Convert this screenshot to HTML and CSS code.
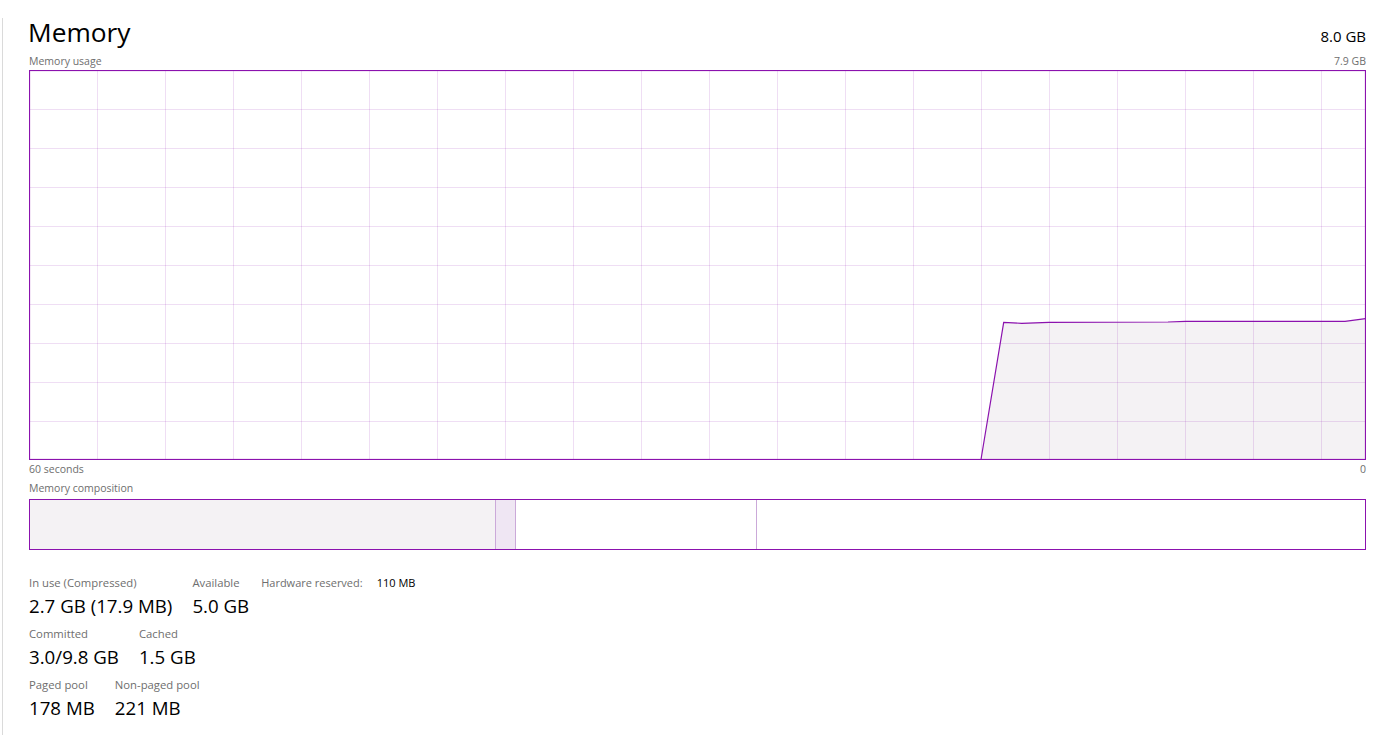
FILE: index.html
```html
<!DOCTYPE html>
<html lang="en">
<head>
<meta charset="utf-8">
<title>Memory</title>
<link rel="stylesheet" href="styles.css">
</head>
<body>
<div class="page">
  <div class="panel">
    <div class="header">
      <div class="title">Memory</div>
      <div class="total">8.0 GB</div>
    </div>
    <div class="caption-row">
      <span>Memory usage</span>
      <span>7.9 GB</span>
    </div>
    <div class="graph">
      <svg class="graph-svg" width="1337" height="390" viewBox="0 0 1337 390" xmlns="http://www.w3.org/2000/svg">
        <polygon points="952,389.5 974.7,252.3 992.7,253.3 1020,252.3 1139,252 1156.7,251.3 1316,251.3 1336.5,248.7 1336.5,389.5" fill="#f4f2f4"/>
        <g stroke="rgba(139,18,174,0.14)" stroke-width="1" shape-rendering="crispEdges">
          <line x1="68.5" y1="0" x2="68.5" y2="390"/>
          <line x1="136.5" y1="0" x2="136.5" y2="390"/>
          <line x1="204.5" y1="0" x2="204.5" y2="390"/>
          <line x1="272.5" y1="0" x2="272.5" y2="390"/>
          <line x1="340.5" y1="0" x2="340.5" y2="390"/>
          <line x1="408.5" y1="0" x2="408.5" y2="390"/>
          <line x1="476.5" y1="0" x2="476.5" y2="390"/>
          <line x1="544.5" y1="0" x2="544.5" y2="390"/>
          <line x1="612.5" y1="0" x2="612.5" y2="390"/>
          <line x1="680.5" y1="0" x2="680.5" y2="390"/>
          <line x1="748.5" y1="0" x2="748.5" y2="390"/>
          <line x1="816.5" y1="0" x2="816.5" y2="390"/>
          <line x1="884.5" y1="0" x2="884.5" y2="390"/>
          <line x1="952.5" y1="0" x2="952.5" y2="390"/>
          <line x1="1020.5" y1="0" x2="1020.5" y2="390"/>
          <line x1="1088.5" y1="0" x2="1088.5" y2="390"/>
          <line x1="1156.5" y1="0" x2="1156.5" y2="390"/>
          <line x1="1224.5" y1="0" x2="1224.5" y2="390"/>
          <line x1="1292.5" y1="0" x2="1292.5" y2="390"/>
          <line x1="0" y1="39.5" x2="1337" y2="39.5"/>
          <line x1="0" y1="78.5" x2="1337" y2="78.5"/>
          <line x1="0" y1="117.5" x2="1337" y2="117.5"/>
          <line x1="0" y1="156.5" x2="1337" y2="156.5"/>
          <line x1="0" y1="195.5" x2="1337" y2="195.5"/>
          <line x1="0" y1="234.5" x2="1337" y2="234.5"/>
          <line x1="0" y1="273.5" x2="1337" y2="273.5"/>
          <line x1="0" y1="312.5" x2="1337" y2="312.5"/>
          <line x1="0" y1="351.5" x2="1337" y2="351.5"/>
        </g>
        <polyline points="952,389.5 974.7,252.3 992.7,253.3 1020,252.3 1139,252 1156.7,251.3 1316,251.3 1336.5,248.7" fill="none" stroke="#8b12ae" stroke-width="1.2"/>
        <rect x="0.5" y="0.5" width="1336" height="389" fill="none" stroke="#8b12ae" stroke-width="1.2"/>
      </svg>
    </div>
    <div class="caption-row axis">
      <span>60 seconds</span>
      <span>0</span>
    </div>
    <div class="caption-row comp-caption">
      <span>Memory composition</span>
    </div>
    <div class="composition">
      <div class="seg seg-inuse" style="width:466px"></div>
      <div class="seg seg-modified" style="width:20px"></div>
      <div class="seg seg-standby" style="width:241px"></div>
      <div class="seg seg-free"></div>
    </div>
    <div class="stats">
      <div class="stat-row">
        <div class="stat">
          <div class="stat-label">In use (Compressed)</div>
          <div class="stat-value">2.7 GB (17.9 MB)</div>
        </div>
        <div class="stat">
          <div class="stat-label">Available</div>
          <div class="stat-value">5.0 GB</div>
        </div>
        <div class="kv">
          <span class="kv-key">Hardware reserved:</span>
          <span class="kv-val">110 MB</span>
        </div>
      </div>
      <div class="stat-row">
        <div class="stat">
          <div class="stat-label">Committed</div>
          <div class="stat-value">3.0/9.8 GB</div>
        </div>
        <div class="stat">
          <div class="stat-label">Cached</div>
          <div class="stat-value">1.5 GB</div>
        </div>
      </div>
      <div class="stat-row">
        <div class="stat">
          <div class="stat-label">Paged pool</div>
          <div class="stat-value">178 MB</div>
        </div>
        <div class="stat">
          <div class="stat-label">Non-paged pool</div>
          <div class="stat-value">221 MB</div>
        </div>
      </div>
    </div>
  </div>
</div>
</body>
</html>
```

FILE: styles.css
```css
html, body {
  margin: 0;
  padding: 0;
  background: #ffffff;
}

body {
  font-family: "Open Sans", "Noto Sans", "Liberation Sans", sans-serif;
  color: #000000;
  width: 1391px;
  height: 749px;
  overflow: hidden;
}

.page {
  padding-left: 2px;
  padding-top: 18px;
}

.panel {
  border-left: 1px solid #dadada;
  height: 717px;
  box-sizing: border-box;
  padding-left: 26px;
  padding-right: 25px;
}

.header {
  display: flex;
  justify-content: space-between;
  align-items: baseline;
  padding-top: 2px;
  height: 24px;
}

.title {
  font-size: 26.3px;
  line-height: 24px;
  margin-left: -1px;
}

.total {
  font-size: 15px;
  line-height: 24px;
}

.caption-row {
  display: flex;
  justify-content: space-between;
  font-size: 10.5px;
  line-height: 16px;
  height: 16px;
  color: #6e6e6e;
  margin-top: 9px;
}

.graph {
  margin-top: 1px;
  height: 390px;
}

.graph-svg {
  display: block;
}

.caption-row.axis {
  margin-top: 1px;
}

.caption-row.comp-caption {
  margin-top: 3px;
}

.composition {
  margin-top: 3px;
  height: 51px;
  box-sizing: border-box;
  border: 1px solid #8b12ae;
  display: flex;
}

.seg {
  height: 100%;
  box-sizing: border-box;
}

.seg-inuse {
  background: #f4f2f4;
  border-right: 1px solid #cba9d9;
}

.seg-modified {
  background: #efe6f3;
  border-right: 1px solid #cba9d9;
}

.seg-standby {
  background: #ffffff;
  border-right: 1px solid #cba9d9;
}

.seg-free {
  flex: 1;
  background: #ffffff;
}

.stats {
  margin-top: 25px;
  display: flex;
  flex-direction: column;
  gap: 8px;
}

.stat-row {
  display: flex;
  gap: 20px;
}

.stat {
  display: flex;
  flex-direction: column;
  gap: 2px;
}

.stat-label {
  font-size: 11.3px;
  line-height: 16px;
  color: #6e6e6e;
}

.stat-value {
  font-size: 18.7px;
  line-height: 25px;
}

.kv {
  display: flex;
  gap: 14px;
  font-size: 11px;
  line-height: 16px;
  margin-left: -8px;
}

.kv-key {
  color: #6e6e6e;
}

.kv-val {
  color: #000000;
}
```
